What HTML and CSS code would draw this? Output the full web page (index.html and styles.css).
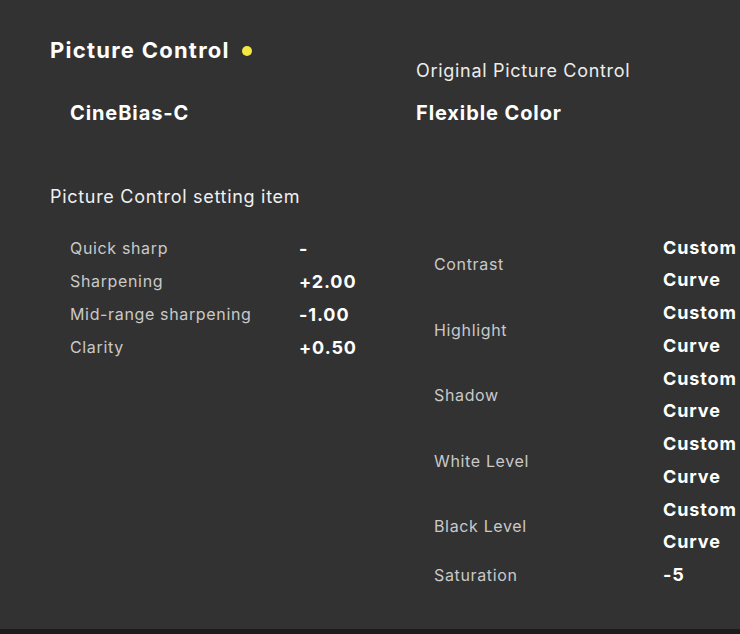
FILE: index.html
```html
<!DOCTYPE html>
<html lang="en">
<head>
<meta charset="utf-8">
<title>Picture Control</title>
<link rel="stylesheet" href="styles.css">
</head>
<body>
<main class="panel">
  <section class="header">
    <h1 class="title">Picture Control <span class="dot"></span></h1>
    <div class="orig-label">Original Picture Control</div>
    <div class="name name-left">CineBias-C</div>
    <div class="name">Flexible Color</div>
  </section>
  <h2 class="section-title">Picture Control setting item</h2>
  <section class="tables">
    <div class="table left">
      <div class="label">Quick sharp</div><div class="value">-</div>
      <div class="label">Sharpening</div><div class="value">+2.00</div>
      <div class="label">Mid-range sharpening</div><div class="value">-1.00</div>
      <div class="label">Clarity</div><div class="value">+0.50</div>
    </div>
    <div class="table right">
      <div class="label">Contrast</div><div class="value">Custom Curve</div>
      <div class="label">Highlight</div><div class="value">Custom Curve</div>
      <div class="label">Shadow</div><div class="value">Custom Curve</div>
      <div class="label">White Level</div><div class="value">Custom Curve</div>
      <div class="label">Black Level</div><div class="value">Custom Curve</div>
      <div class="label">Saturation</div><div class="value">-5</div>
    </div>
  </section>
</main>
<div class="bottom-strip"></div>
</body>
</html>
```
FILE: styles.css
```css
html, body {
  margin: 0;
  padding: 0;
  overflow: hidden;
}
body {
  background: #323232;
  color: #ffffff;
  font-family: Inter, "Noto Sans", "Liberation Sans", sans-serif;
  width: 740px;
  height: 634px;
}
.panel {
  height: 629px;
  box-sizing: border-box;
  padding: 35px 0 0 50px;
}
.header {
  display: grid;
  grid-template-columns: 366px 1fr;
  grid-template-rows: 51px 30px;
  row-gap: 12px;
}
.title {
  margin: 0;
  font-size: 22px;
  font-weight: 700;
  line-height: 30px;
  align-self: start;
  display: flex;
  align-items: center;
  letter-spacing: 1.25px;
}
.dot {
  display: inline-block;
  width: 10px;
  height: 10px;
  border-radius: 50%;
  background: #f3e741;
  margin-left: 12px;
  margin-top: 2px;
}
.orig-label {
  align-self: end;
  font-size: 18px;
  line-height: 30px;
  color: #ececec;
  letter-spacing: 0.7px;
}
.name {
  font-size: 20px;
  font-weight: 700;
  line-height: 30px;
  letter-spacing: 0.9px;
}
.name-left {
  padding-left: 20px;
}
.section-title {
  margin: 54px 0 0 0;
  font-size: 18px;
  font-weight: 400;
  line-height: 30px;
  color: #f0f0f0;
  letter-spacing: 0.7px;
}
.tables {
  display: grid;
  grid-template-columns: 366px 1fr;
  margin-top: 19.5px;
}
.table {
  display: grid;
  grid-template-columns: 229px 77px;
  align-items: center;
}
.table.left {
  padding-left: 20px;
  grid-auto-rows: 33px;
  align-content: start;
}
.table.right {
  padding-left: 18px;
}
.label {
  font-size: 16px;
  color: #c9c9c9;
  letter-spacing: 0.65px;
}
.value {
  font-size: 18px;
  font-weight: 700;
  line-height: 32.75px;
  color: #ffffff;
  letter-spacing: 0.9px;
}
.table.left .value {
  line-height: 33px;
}
.bottom-strip {
  height: 5px;
  background: #1c1c1c;
}
```
